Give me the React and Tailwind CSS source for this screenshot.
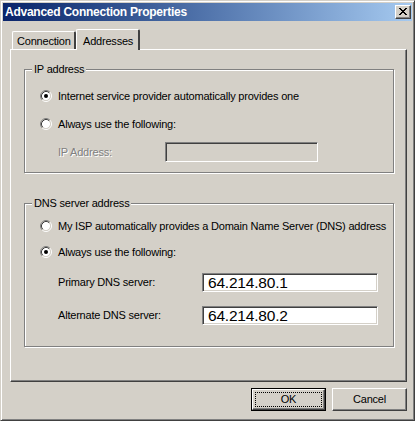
import React from "react";

function Radio({ checked }) {
  return (
    <svg width="12" height="12" viewBox="0 0 12 12" className="shrink-0">
      <circle cx="6" cy="6" r="4.2" fill="#fff" />
      <path d="M2.11 9.89 A5.5 5.5 0 0 1 9.89 2.11" fill="none" stroke="#808080" />
      <path d="M9.89 2.11 A5.5 5.5 0 0 1 2.11 9.89" fill="none" stroke="#fff" />
      <path d="M2.82 9.18 A4.5 4.5 0 0 1 9.18 2.82" fill="none" stroke="#404040" />
      <path d="M9.18 2.82 A4.5 4.5 0 0 1 2.82 9.18" fill="none" stroke="#d4d0c8" />
      {checked && <circle cx="6" cy="6" r="2" fill="#000" />}
    </svg>
  );
}

function RadioRow({ checked, children }) {
  return (
    <div className="flex items-center h-[12px]">
      <Radio checked={checked} />
      <span className="ml-[6px] leading-none whitespace-nowrap">{children}</span>
    </div>
  );
}

function GroupBox({ title, className, children }) {
  return (
    <div
      className={
        "relative ml-[13px] w-[370px] border border-[#808080] shadow-[inset_1px_1px_0_#fff,1px_1px_0_#fff] " +
        className
      }
    >
      <span className="absolute left-[7px] top-[-8px] bg-[#d4d0c8] px-[2px] leading-[14px] whitespace-nowrap">
        {title}
      </span>
      {children}
    </div>
  );
}

function CloseGlyph() {
  const rows = [
    [0, 1, 6, 7],
    [1, 2, 5, 6],
    [2, 3, 4, 5],
    [3, 4],
    [2, 3, 4, 5],
    [1, 2, 5, 6],
    [0, 1, 6, 7],
  ];
  return (
    <svg width="8" height="7" viewBox="0 0 8 7" shapeRendering="crispEdges">
      {rows.map((cols, y) =>
        cols.map((x) => <rect key={y + "-" + x} x={x} y={y} width="1" height="1" fill="#000" />)
      )}
    </svg>
  );
}

function SunkenInput({ value, disabled, className }) {
  return (
    <div
      className={
        "border border-t-[#808080] border-l-[#808080] border-r-white border-b-white shadow-[inset_1px_1px_0_#404040,inset_-1px_-1px_0_#d4d0c8] flex items-center pl-[5px] " +
        (disabled ? "bg-[#d4d0c8] " : "bg-white ") +
        className
      }
    >
      {value && (
        <span className="text-[15.5px] leading-none text-black font-['Liberation_Sans',Arial,sans-serif] pt-[1px]">
          {value}
        </span>
      )}
    </div>
  );
}

export default function App() {
  return (
    <div className="w-[415px] h-[421px] bg-[#d4d0c8] border border-t-[#d4d0c8] border-l-[#d4d0c8] border-r-[#404040] border-b-[#404040] shadow-[inset_1px_1px_0_#fff,inset_-1px_-1px_0_#808080] p-[2px] text-[11px] text-black font-['Liberation_Sans',Arial,sans-serif] tracking-[-0.2px] select-none">
      {/* Title bar */}
      <div className="h-[18px] flex items-center justify-between bg-gradient-to-r from-[#0a246a] to-[#a6caf0]">
        <span className="pl-[2px] text-white font-bold text-[12px] tracking-[-0.25px] leading-none">
          Advanced Connection Properties
        </span>
        <div className="mr-[1px] w-[16px] h-[14px] bg-[#d4d0c8] border border-t-white border-l-white border-r-[#404040] border-b-[#404040] shadow-[inset_-1px_-1px_0_#808080] flex items-center justify-center pb-[1px]">
          <CloseGlyph />
        </div>
      </div>

      {/* Tabs */}
      <div className="ml-[7px] w-[397px] mt-[8px]">
        <div className="flex items-end h-[20px] pl-[2px]">
          <div className="w-[64px] h-[18px] border-l border-t border-white border-r-2 border-r-[#404040] rounded-tl-[2px] rounded-tr-[2px] flex items-center pl-[4px] pt-[1px]">
            Connection
          </div>
          <div className="relative z-10 w-[64px] h-[21px] -mb-[1px] bg-[#d4d0c8] border-l border-t border-white border-r-2 border-r-[#404040] rounded-tl-[2px] rounded-tr-[2px] flex items-start pl-[6px] pt-[3px]">
            Addresses
          </div>
        </div>

        {/* Panel */}
        <div className="h-[333px] border border-t-white border-l-white border-r-[#404040] border-b-[#404040] shadow-[inset_-1px_-1px_0_#808080] pt-[19px]">
          <GroupBox title="IP address" className="h-[104px] pl-[15px] pt-[20px]">
            <RadioRow checked>Internet service provider automatically provides one</RadioRow>
            <div className="mt-[16px]">
              <RadioRow>Always use the following:</RadioRow>
            </div>
            <div className="mt-[12px] flex items-center pl-[18px]">
              <span className="w-[107px] text-[#808080] [text-shadow:1px_1px_0_#fff]">IP Address:</span>
              <SunkenInput disabled className="w-[153px] h-[20px]" />
            </div>
          </GroupBox>

          <GroupBox title="DNS server address" className="mt-[30px] h-[144px] pl-[15px] pt-[16px]">
            <RadioRow>My ISP automatically provides a Domain Name Server (DNS) address</RadioRow>
            <div className="mt-[14px]">
              <RadioRow checked>Always use the following:</RadioRow>
            </div>
            <div className="mt-[15px] flex items-center pl-[18px]">
              <span className="w-[144px]">Primary DNS server:</span>
              <SunkenInput value="64.214.80.1" className="w-[176px] h-[19px]" />
            </div>
            <div className="mt-[14px] flex items-center pl-[18px]">
              <span className="w-[144px]">Alternate DNS server:</span>
              <SunkenInput value="64.214.80.2" className="w-[176px] h-[19px]" />
            </div>
          </GroupBox>
        </div>

        {/* Buttons */}
        <div className="mt-[6px] flex justify-end gap-[6px]">
          <div className="w-[75px] h-[23px] border border-black">
            <div className="w-full h-full bg-[#d4d0c8] border border-t-white border-l-white border-r-[#404040] border-b-[#404040] shadow-[inset_-1px_-1px_0_#808080] p-[2px]">
              <div className="w-full h-full border border-dotted border-black flex items-center justify-center">
                OK
              </div>
            </div>
          </div>
          <div className="w-[75px] h-[23px] bg-[#d4d0c8] border border-t-white border-l-white border-r-[#404040] border-b-[#404040] shadow-[inset_-1px_-1px_0_#808080] flex items-center justify-center">
            Cancel
          </div>
        </div>
      </div>
    </div>
  );
}
